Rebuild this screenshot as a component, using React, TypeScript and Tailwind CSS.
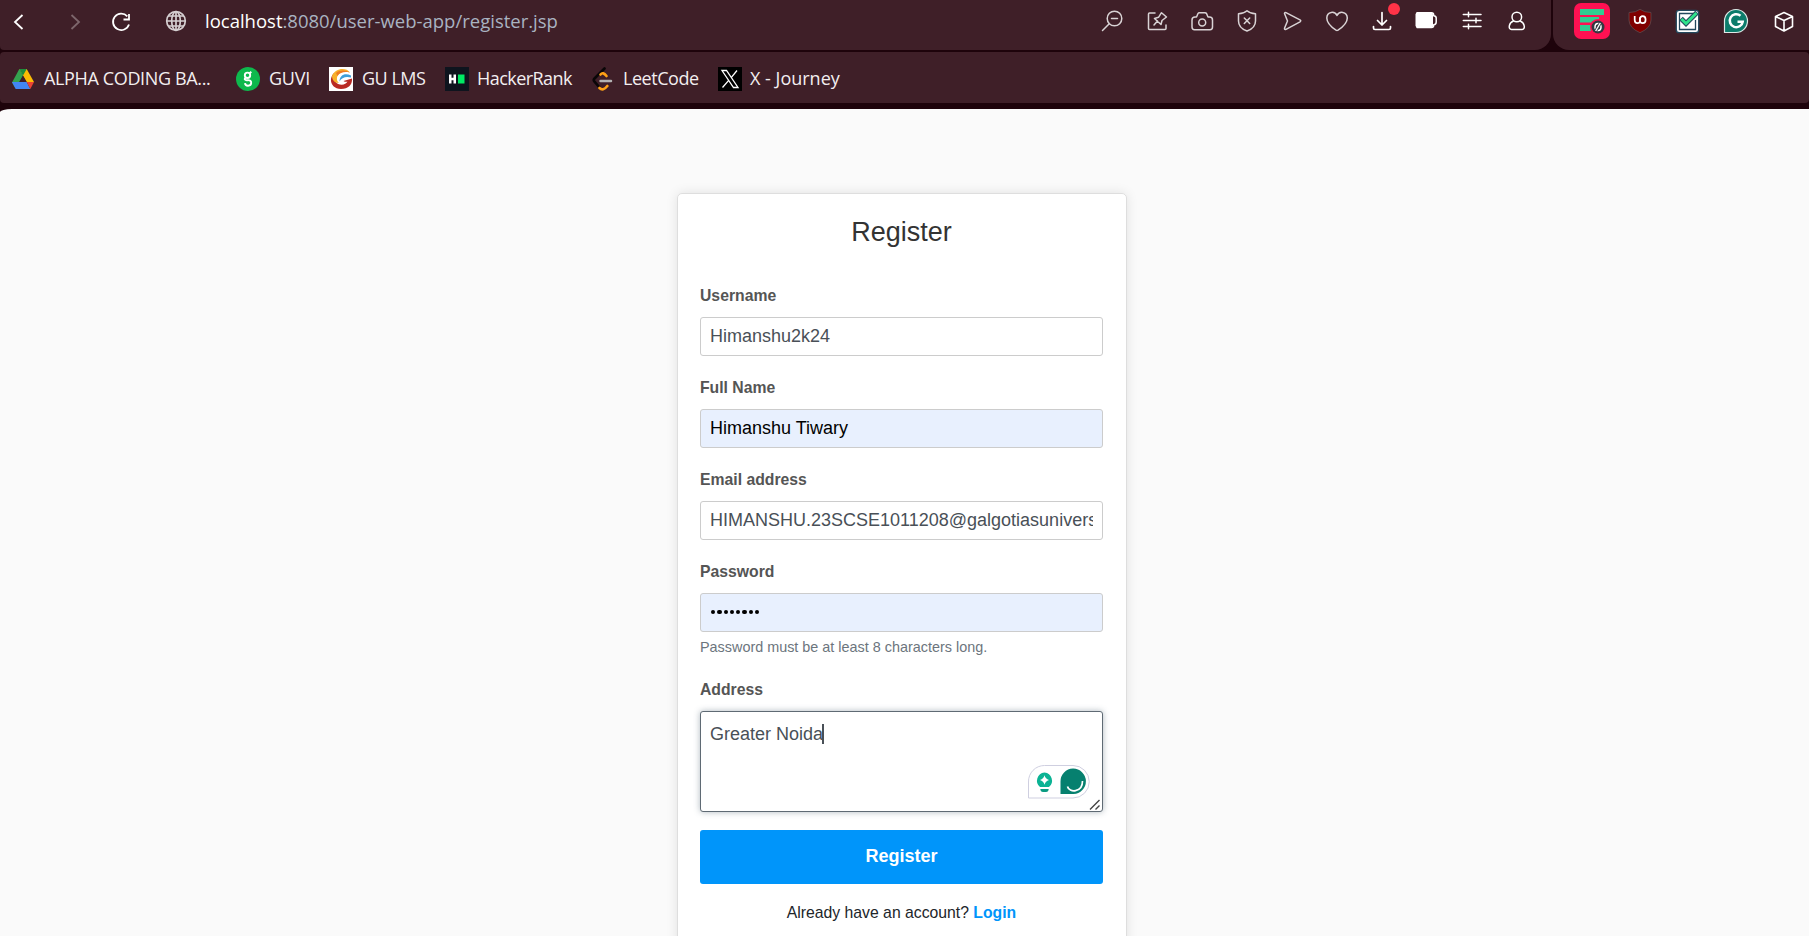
import React from "react";

const line = {
  fill: "none",
  stroke: "#d9d3d5",
  strokeWidth: 1.5,
  strokeLinecap: "round" as const,
  strokeLinejoin: "round" as const,
};

function Cell({ children }: { children: React.ReactNode }) {
  return (
    <svg width="45" height="50" viewBox="0 0 45 50" {...line} className="shrink-0">
      {children}
    </svg>
  );
}

function ExtCell({ children }: { children: React.ReactNode }) {
  return (
    <svg width="48" height="50" viewBox="0 0 48 50" fill="none" className="shrink-0">
      {children}
    </svg>
  );
}

function Toolbar() {
  return (
    <div className="flex h-[50px] w-full gap-[2px]">
      <div className="flex h-full w-[1551px] items-center rounded-b-[16px] rounded-bl-[4px] bg-[#3f1f28]">
        <svg width="205" height="50" viewBox="0 0 205 50" fill="none" strokeWidth="1.800" className="shrink-0">
          <path d="M22.5 15 L15 22 L22.5 29" stroke="#fff" />
          <path d="M71.500 15 L79 22 L71.500 29" stroke="#7d666c" />
          <path d="M127.300 16.300 A8.200 8.200 0 1 0 129 24.500" stroke="#fff" />
          <path d="M129 14 V19.500 H123.500" stroke="#fff" />
          <g stroke="#d5cfd1" strokeWidth="1.700">
            <circle cx="176" cy="21" r="9.300" />
            <ellipse cx="176" cy="21" rx="4.300" ry="9.300" />
            <path d="M176 11.700 V30.300 M166.700 21 H185.300 M168.500 16 H183.500 M168.500 26 H183.500" />
          </g>
        </svg>
        <div className="h-[50px] w-[885px] pt-[7px] font-['Open_Sans',sans-serif] text-[18.5px] leading-[28px] whitespace-nowrap text-[#a9b3c1]">
          <span className="text-white">localhost</span>:8080/user-web-app/register.jsp
        </div>
        <Cell>
          <circle cx="24.500" cy="18.500" r="7.300" />
          <path d="M19 24 L12.500 30.500 M21.500 18.500 H27.500" />
        </Cell>
        <Cell>
          <path d="M20 13 H14.500 Q13.500 13 13.500 14 V28.500 Q13.500 29.500 14.500 29.500 H30 Q31 29.500 31 28.500 V25" />
          <path d="M19 25 L22.500 21 M19.500 18.500 L26 24.500 L27 20.500 L31.500 17 L26.500 12.700 L23.500 17.300 Z" />
        </Cell>
        <Cell>
          <path d="M12 20 Q12 17 15 17 H16.500 L18 13.500 Q18.400 12.700 19.500 12.700 H25 Q26 12.700 26.500 13.500 L28 17 H29.500 Q32.500 17 32.500 20 V27 Q32.500 29.700 30 29.700 H14.500 Q12 29.700 12 27 Z" />
          <circle cx="22.200" cy="22.500" r="3.500" />
        </Cell>
        <Cell>
          <path d="M22 10.700 Q25 13.500 30.500 13.700 V21 Q30.500 28 22 31 Q13.500 28 13.500 21 V13.700 Q19 13.500 22 10.700 Z" />
          <path d="M19.300 18 L24.700 23.500 M24.700 18 L19.300 23.500" />
        </Cell>
        <Cell>
          <path d="M14.500 13.500 Q14.500 12 16 12.600 L30 19.800 Q31.500 20.800 30 21.800 L16 29.300 Q14 30 14.600 28 L17.500 21 Z" />
        </Cell>
        <Cell>
          <path d="M22 15.500 C20 11 12 11 11.800 18 C11.800 23.500 17 27.500 21 30.200 Q22 30.800 23 30.200 C27 27.500 32.300 23.500 32.300 18 C32 11 24 11 22 15.500 Z" />
        </Cell>
        <Cell>
          <g stroke="#fff" strokeWidth="1.700">
            <path d="M22 12.500 V25 M17.500 20.500 L22 25 L26.500 20.500 M13.500 26.500 V28 Q13.500 29.500 15 29.500 H29 Q30.500 29.500 30.500 28 V26.500" />
          </g>
          <circle cx="34" cy="9" r="6" fill="#ff3347" stroke="none" />
        </Cell>
        <Cell>
          <rect x="10.500" y="12.500" width="17.500" height="15" rx="2" fill="#fff" stroke="none" />
          <path d="M12 12.700 H26.500 Q28.700 12.700 28.700 15 V15.700 Q31.200 16 31.200 18 V22 Q31.200 24.500 28.700 24.700 V25 Q28.700 27.500 26.500 27.500 H12" stroke="#fff" />
        </Cell>
        <Cell>
          <path d="M13.300 14.500 H31 M13.300 20.500 H31 M13.300 26.500 H31 M18.500 12.300 V16.700 M26 18.300 V22.700 M18.500 24.300 V28.700" stroke="#fff" />
        </Cell>
        <Cell>
          <g stroke="#fff">
            <circle cx="21.800" cy="17" r="4.800" />
            <path d="M18.300 21 C13.500 23 13 29.500 16.500 29.500 H27.200 C30.500 29.500 30 23 25.300 21" />
          </g>
        </Cell>
      </div>
      <div className="flex h-full flex-1 rounded-bl-[16px] bg-[#3f1f28] pl-[15px]">
        <ExtCell>
          <rect x="6" y="3" width="36" height="36" rx="7" fill="#ff1152" />
          <path d="M12 9 H36 V15 H12 Z M12 17 H31 V22.500 H12 Z M12 25 H26 V31 H12 Z" fill="#2fcf91" />
          <circle cx="30" cy="27" r="8" fill="#ff1152" />
          <circle cx="30" cy="27" r="6.500" fill="#333740" />
          <ellipse cx="30" cy="27" rx="3" ry="3.500" stroke="#fff" strokeWidth="1.500" />
          <path d="M32.500 22.800 L27.500 31.200" stroke="#333740" strokeWidth="3" />
          <path d="M32.300 23 L27.700 31" stroke="#fff" strokeWidth="1.400" />
        </ExtCell>
        <ExtCell>
          <path d="M24 9.300 Q28 12.500 35 12.500 V20 Q35 28 24 32.700 Q13 28 13 20 V12.500 Q20 12.500 24 9.300 Z" fill="#800000" stroke="#5f4a4c" strokeWidth="0.800" />
          <path d="M18.700 16 V20 Q18.700 23.200 21.500 23.200 Q24 23.200 24 20.500 V16" stroke="#fff" strokeWidth="1.700" />
          <ellipse cx="26.700" cy="19.700" rx="2.900" ry="3.500" stroke="#fff" strokeWidth="1.700" />
          <path d="M22.800 15 H25 L23.200 17.500 Z" fill="#800000" />
        </ExtCell>
        <ExtCell>
          <rect x="12.300" y="10.300" width="22.400" height="22.400" rx="3" fill="#fff" stroke="#23485d" strokeWidth="1.300" />
          <path d="M29 13.500 H15.500 V29.500 H31.500 V20" stroke="#23485d" strokeWidth="1.300" />
          <path d="M17 18.500 L22 23.500 L33 12.500" stroke="#23485d" strokeWidth="5" />
          <path d="M17.500 19 L22 23.500 L32.500 13" stroke="#2fe38a" strokeWidth="3" />
        </ExtCell>
        <ExtCell>
          <path d="M12.500 32.500 V21 A11.500 11.500 0 1 1 24 32.500 Z" fill="#0c7c6b" stroke="#dfe9e7" strokeWidth="1.200" />
          <path d="M28.500 15.800 A6.500 6.500 0 1 0 30.700 21.700 H25.500" stroke="#fff" strokeWidth="2.500" />
        </ExtCell>
        <ExtCell>
          <path d="M24 12.500 L32.500 16.500 V26.500 L24 31 L15.500 26.500 V16.500 Z M15.500 16.500 L24 20.500 L32.500 16.500 M24 20.500 V31" stroke="#fff" strokeWidth="1.600" strokeLinejoin="round" />
        </ExtCell>
      </div>
    </div>
  );
}

function Bookmark({ className, label, textClass, children }: { className: string; label: string; textClass: string; children: React.ReactNode }) {
  return (
    <div className={`flex h-6 shrink-0 items-start ${className}`}>
      <svg width="24" height="24" viewBox="0 0 24 24" fill="none" className="shrink-0">
        {children}
      </svg>
      <span className={`-mt-px whitespace-nowrap ${textClass}`}>{label}</span>
    </div>
  );
}

function Bookmarks() {
  return (
    <div className="flex h-[51px] w-full items-center rounded-[4px] bg-[#3f1f28] pt-[3px] pl-[11px] font-['Open_Sans',sans-serif] text-[18px] leading-6 text-[#f3eef0]">
      <Bookmark className="w-[225px] gap-[9px]" label="ALPHA CODING BA..." textClass="tracking-[-0.36px]">
        <path d="M8.300 2 H15.700 L23 15 H15.700 Z" fill="#fbbc04" />
        <path d="M8.300 2 H15.700 L12 8.500 Z" fill="#1e8e3e" />
        <path d="M8.300 2 L12 8.500 L4.500 21.500 L1 15.500 Z" fill="#34a34f" />
        <path d="M1 15 H15.700 L19.300 22 H4.700 Z" fill="#4285f4" />
        <path d="M15.700 15 H23 L19.300 22 Z" fill="#ea4335" />
        <path d="M12 8.700 L15.600 15 H8.400 Z" fill="#3f1f28" />
      </Bookmark>
      <Bookmark className="w-[93px] gap-[9px]" label="GUVI" textClass="tracking-[-0.25px]">
        <circle cx="12" cy="12" r="12" fill="#0eb84d" />
        <circle cx="11.500" cy="8.300" r="2.700" stroke="#fff" strokeWidth="1.900" />
        <path d="M15.300 4.800 L13.500 6.500 M10 10.500 C7.500 12 9 13.500 11.500 13.200 C14 13 15.300 14 15.200 16 C15 19.500 9.300 19.700 9 16.200" stroke="#fff" strokeWidth="1.900" />
      </Bookmark>
      <Bookmark className="w-[116px] gap-[9px]" label="GU LMS" textClass="tracking-[-0.5px]">
        <rect width="24" height="24" fill="#fff" />
        <path d="M5 6 C-1 12 2 22 12 22 C20 22 23.500 17 23 11.500 L14.500 14 C16 15 17.500 15 18.500 14.500 C17 18.500 9 19 6.500 14.500 C5 11.500 5.500 8 8 5.500 Z" fill="#b92a24" />
        <path d="M3 9 C6 1 17 0 21 5.500 C16 3.500 9 5 8 10.500 C7.500 13 8.500 15 10 16 C5 16 3 12.500 3 9 Z" fill="#f8b12a" />
        <path d="M7 6 C11 2.500 17 3 21 5.500 C16 4.500 11 5 8.500 9 Z" fill="#ee7b22" />
        <path d="M22 8.500 C16 5.500 10.500 8 10.500 14.500 C12.500 10.500 17 9 22 10.500 Z" fill="#3d9fd8" />
      </Bookmark>
      <Bookmark className="w-[147px] gap-[8px]" label="HackerRank" textClass="tracking-[-0.55px]">
        <rect width="24" height="24" fill="#0e141e" />
        <path d="M4 7.500 H6.500 V10.700 H8.500 V7.500 H11 V16.500 H8.500 V13.200 H6.500 V16.500 H4 Z" fill="#fff" />
        <rect x="13" y="7.500" width="6.500" height="9" fill="#00ea64" />
      </Bookmark>
      <Bookmark className="w-[126px] gap-[7px]" label="LeetCode" textClass="tracking-[-0.45px]">
        <path d="M12.500 1.500 L2.500 11.500 Q1 13 2.500 14.700 L7.500 20.500" stroke="#090607" strokeWidth="2.600" strokeLinecap="round" />
        <path d="M8.500 7.500 Q11 4.500 14.500 9" stroke="#ffa116" strokeWidth="2.600" strokeLinecap="round" />
        <path d="M7.500 21 Q11 24.500 15.300 19" stroke="#ffa116" strokeWidth="2.600" strokeLinecap="round" />
        <path d="M8.500 14 H19" stroke="#b3b3b3" strokeWidth="2.500" strokeLinecap="round" />
      </Bookmark>
      <Bookmark className="w-[130px] gap-[8px]" label="X - Journey" textClass="">
        <rect width="24" height="24" fill="#000" />
        <path d="M4 3.500 H8.500 L20 20.500 H15.500 Z M19 3.500 L13 10.800 M10.700 13.300 L4.500 20.500" stroke="#fff" strokeWidth="1.300" />
      </Bookmark>
    </div>
  );
}

function Label({ children }: { children: React.ReactNode }) {
  return <label className="-mt-[2px] h-[33px] text-[15.75px] leading-[24px] font-bold text-[#555]">{children}</label>;
}

function Field({ label, value, filled, password }: { label: string; value: string; filled?: boolean; password?: boolean }) {
  return (
    <div className="flex h-[92px] flex-col">
      <Label>{label}</Label>
      <div className={`h-[39px] rounded-[3px] border border-[#ccc] px-[9px] ${filled ? "bg-[#e8f0fe] text-black" : "bg-white text-[#495057]"}`}>
        <div className="overflow-hidden text-[18px] leading-[37px] whitespace-nowrap">
          {password ? (
            <span className="flex h-[36px] items-center gap-[2px] pl-px">
              {value.split("").map((_, i) => (
                <span key={i} className="size-[4.300px] rounded-full bg-black" />
              ))}
            </span>
          ) : (
            value
          )}
        </div>
      </div>
    </div>
  );
}

function WritingAssistant() {
  return (
    <svg width="62" height="34" viewBox="0 0 62 34" fill="none" className="absolute right-[12px] bottom-[12px]">
      <path d="M0.500 33 V17 A16 16 0 0 1 16.500 0.500 H45 A16.250 16.250 0 0 1 45 33 Z" fill="#fff" stroke="#cfcfe0" />
      <path d="M16.500 7.500 A8.200 8.200 0 0 1 21 22 H12 A8.200 8.200 0 0 1 16.500 7.500 Z" fill="#0bb394" />
      <path d="M12.300 24 H20.700 Q20.500 27 18 27 H15 Q12.500 27 12.300 24 Z" fill="#0a9b82" />
      <path d="M16.500 10.300 Q17.500 14 21 15 Q17.500 16 16.500 19.700 Q15.500 16 12 15 Q15.500 14 16.500 10.300 Z" fill="#fff" />
      <path d="M32.500 29 V16.500 A12.700 12.700 0 1 1 45.500 29 Z" fill="#06806f" />
      <path d="M39.500 21.500 C41 28 54.500 28 54.500 16" stroke="#fff" strokeWidth="1.700" />
    </svg>
  );
}

function RegisterCard() {
  return (
    <div className="mt-[84px] h-[780px] w-[450px] shrink-0 rounded-[5px] border border-[#dedede] bg-white pr-[23px] pl-[22px] font-['Liberation_Sans',Arial,sans-serif] shadow-[0_0_12px_rgba(0,0,0,0.1)]">
      <h2 className="h-[92px] pt-[21px] text-center text-[27px] leading-[34px] text-[#333]">Register</h2>
      <Field label="Username" value="Himanshu2k24" />
      <Field label="Full Name" value="Himanshu Tiwary" filled />
      <Field label="Email address" value="HIMANSHU.23SCSE1011208@galgotiasuniversity.edu.in" />
      <div className="flex h-[118px] flex-col">
        <div className="h-[75px]">
          <Field label="Password" value="••••••••" filled password />
        </div>
        <p className="text-[14.4px] leading-[20px] text-[#6c757d]">Password must be at least 8 characters long.</p>
      </div>
      <div className="flex flex-col">
        <Label>Address</Label>
        <div className="relative flex h-[101px] items-start rounded-[3px] border border-[#5f6a74] bg-white pt-[10px] pl-[9px] text-[18px] leading-[25px] text-[#495057] shadow-[0_0_6px_rgba(80,100,115,0.45)]">
          <span>Greater Noida</span>
          <span className="mt-[2px] -ml-px h-5 w-[2px] bg-[#495057]" />
          <WritingAssistant />
          <svg width="12" height="12" viewBox="0 0 12 12" className="absolute right-[1px] bottom-0" stroke="#444" strokeWidth="1.400">
            <path d="M1 10.500 L10.500 1 M6.500 10.500 L10.500 6.500" />
          </svg>
        </div>
      </div>
      <button className="mt-[18px] block h-[54px] w-full rounded-[3px] bg-[#0095fa] pb-[2px] text-[18px] font-bold text-white">Register</button>
      <p className="mt-[17px] text-center text-[15.75px] leading-[24px] text-[#212529]">
        Already have an account? <a className="font-bold text-[#0095fa]">Login</a>
      </p>
    </div>
  );
}

export default function App() {
  return (
    <div className="flex h-[936px] w-[1809px] flex-col overflow-hidden bg-[#1e030b]">
      <Toolbar />
      <div className="h-[2px] shrink-0" />
      <Bookmarks />
      <div className="mt-[6px] flex min-h-0 flex-1 items-start overflow-hidden rounded-tl-[12px_3px] bg-[#fafafa] pl-[677px]">
        <RegisterCard />
      </div>
    </div>
  );
}
